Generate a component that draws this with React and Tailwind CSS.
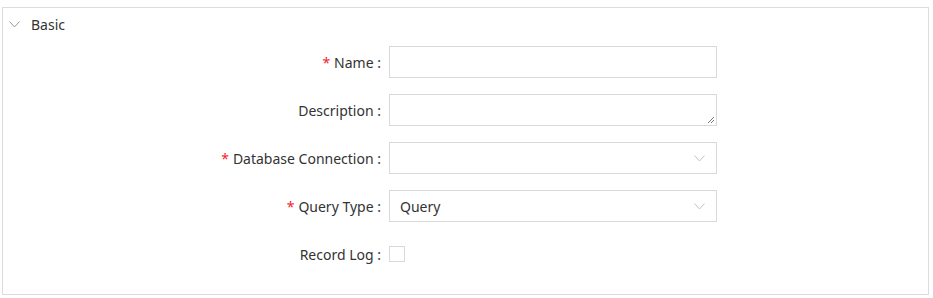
export default function App() {
  const rows = [
    { label: "Name", required: true, type: "input" },
    { label: "Description", required: false, type: "textarea" },
    { label: "Database Connection", required: true, type: "select", value: "" },
    { label: "Query Type", required: true, type: "select", value: "Query" },
  ];

  return (
    <div className="min-h-screen bg-white pt-[7px] px-[2px] font-['Noto_Sans',sans-serif] text-[14px] text-[#333]">
      <div className="border border-[#dcdcdc] w-[927px]">
        {/* Section header */}
        <div className="flex items-center h-[32px] pl-[6px]">
          <svg width="11" height="7" viewBox="0 0 11 7" className="mr-[11px]">
            <path d="M0.5 0.5 L5.5 6 L10.5 0.5" fill="none" stroke="#999" strokeWidth="1" />
          </svg>
          <span>Basic</span>
        </div>

        {/* Form body */}
        <div className="flex flex-col gap-[16px] pt-[6px] pb-[24px]">
          {rows.map((r) => (
            <div key={r.label} className="flex items-center h-[32px]">
              <label className="w-[380px] text-right pr-[2px] whitespace-nowrap">
                {r.required && <span className="text-[#f5222d] mr-[4px]">*</span>}
                {r.label} :
              </label>
              <div className="ml-[6px]">
                {r.type === "input" && (
                  <div className="w-[328px] h-[32px] border border-[#d9d9d9] bg-white" />
                )}
                {r.type === "textarea" && (
                  <div className="relative w-[328px] h-[32px] border border-[#d9d9d9] bg-white">
                    <svg width="8" height="8" viewBox="0 0 8 8" className="absolute right-[1px] bottom-[1px]">
                      <path d="M7 1 L1 7 M7 4 L4 7" stroke="#777" strokeWidth="1" />
                    </svg>
                  </div>
                )}
                {r.type === "select" && (
                  <div className="flex items-center justify-between w-[328px] h-[32px] border border-[#d9d9d9] bg-white pl-[10px] pr-[11px]">
                    <span className="text-[#333]">{r.value}</span>
                    <svg width="11" height="7" viewBox="0 0 11 7">
                      <path d="M0.5 0.5 L5.5 6 L10.5 0.5" fill="none" stroke="#c4c4c4" strokeWidth="1" />
                    </svg>
                  </div>
                )}
              </div>
            </div>
          ))}
          <div className="flex items-center h-[32px]">
            <label className="w-[380px] text-right pr-[2px] whitespace-nowrap">Record Log :</label>
            <div className="ml-[6px] w-[16px] h-[16px] border border-[#d9d9d9] bg-white" />
          </div>
        </div>
      </div>
    </div>
  );
}
